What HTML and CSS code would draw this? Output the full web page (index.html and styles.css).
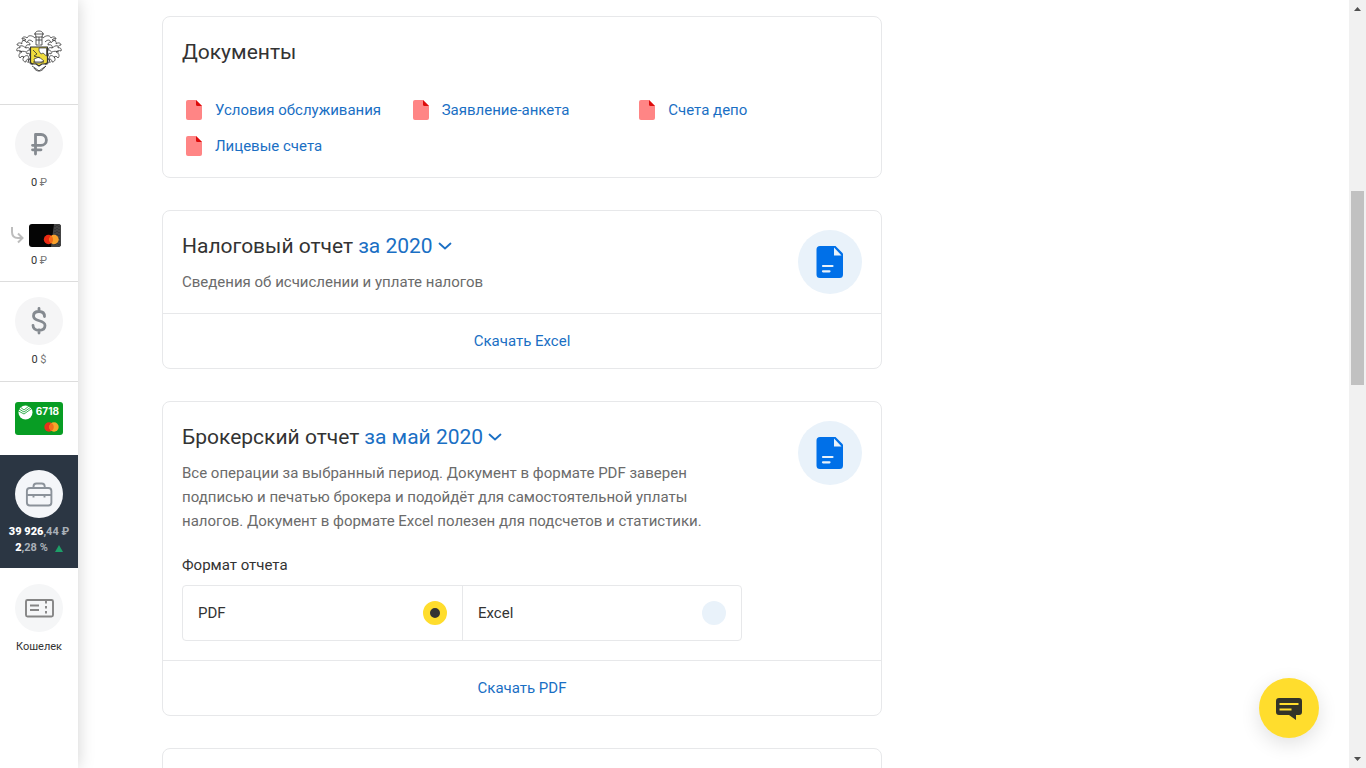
FILE: index.html
```html
<!DOCTYPE html>
<html lang="ru">
<head>
<meta charset="utf-8">
<meta name="viewport" content="width=device-width, initial-scale=1">
<title>Документы и отчеты</title>
<link rel="stylesheet" href="styles.css">
</head>
<body>
<svg class="sprite" aria-hidden="true">
  <symbol id="pdf" viewBox="0 0 16 20">
    <path fill="#ff8585" d="M2 0h8l6 6v12a2 2 0 0 1-2 2H2a2 2 0 0 1-2-2V2a2 2 0 0 1 2-2z"/>
    <path fill="#dd0b0b" d="M10 0l6 6h-4.500a1.500 1.500 0 0 1-1.500-1.500z"/>
  </symbol>
  <symbol id="report" viewBox="0 0 64 64">
    <path fill="#0070e8" d="M22 16h14l9 9v19.500a3.500 3.500 0 0 1-3.500 3.500h-19.500a3.500 3.500 0 0 1-3.500-3.500V19.500A3.500 3.500 0 0 1 22 16z"/>
    <path fill="#0070e8" d="M34 16h3.500L45 23.500V28z"/>
    <path fill="#e9f2fa" d="M36 17.500l7.500 8H36z"/>
    <path stroke="#e9f2fa" stroke-width="2.200" stroke-linecap="round" d="M25 36h9.500M25 41.300h6.500"/>
  </symbol>
  <symbol id="chevron" viewBox="0 0 14 8">
    <path fill="none" stroke="#1a6fc4" stroke-width="1.800" stroke-linecap="round" stroke-linejoin="round" d="M1.500 1.500L7 6.500l5.500-5"/>
  </symbol>
</svg>
<div class="app">
  <nav class="sidebar" aria-label="Счета">
    <a class="brand" href="#" aria-label="На главную">
      <svg width="48" height="44" viewBox="0 0 48 44" fill="none" stroke="#333" stroke-width=".8" stroke-linejoin="round">
        <g id="mantle">
          <path d="M20 8c-3-3-7-3-8 0-2-2-5-1-5 1 2-1 3 0 4 1-3 0-5 2-4 4-2-2-5-1-5 1 2 0 3 1 3 3-2-1-4 1-3 3 2-1 4 0 5 1-3 1-4 4-2 6 1-2 3-2 4-1-2 2-1 5 2 5 0-2 1-3 3-3-1 3 1 6 4 5-1-2 1-3 2-3"/>
          <path d="M18 12c-3-3-5-2-6 0 2 0 3 1 3 3-3-1-5 1-4 3 2-1 4 0 4 2-3 0-4 2-3 4 1-1 3-1 3 1-2 1-2 4 1 5M7 10c3 0 4 2 5 3M5 16c3-1 4 1 6 2M4 22c3-1 5-1 7 0M8 28c2-2 3-3 5-2M13 33c0-3 1-4 3-5"/>
        </g>
        <use href="#mantle" transform="translate(48 0) scale(-1 1)"/>
        <path fill="#fff" d="M20 4c0-4 8-4 8 0l-1 2v9h-6V6zM19 4h10M20 7h8M24 7v7M21 10h6"/>
        <path fill="#f0dc3c" stroke-width="1.200" d="M15.500 17h17v15q0 2-4 2h-1.500l-3 2-3-2h-1.500q-4 0-4-2z"/>
        <path fill="#fff" stroke-width=".7" d="M24 18h7.500v8l-3.500-3-2 1-2-3zM19 29l5-2 5 4-4 2h-5z"/>
        <path d="M18 20l4 4-3 2 6 2M18 32h11M19 38c2 4 8 4 10 0l2-2M17 36l3 2 4 3 4-3 3-2"/>
      </svg>
    </a>
    <div class="group">
      <a class="account" href="#">
        <span class="disc"><svg width="48" height="48" viewBox="0 0 48 48" fill="none" stroke="#858a90" stroke-width="2.800" stroke-linecap="round" stroke-linejoin="round"><path d="M20.500 34V14.500h5.500a5.200 5.200 0 0 1 0 10.800H17.500M17.500 29.800H26"/></svg></span>
        <span class="amount">0 <i>₽</i></span>
      </a>
      <a class="account linked" href="#">
        <span class="linked-row">
          <svg width="14" height="18" viewBox="0 0 14 18" fill="none" stroke="#bdbdbd" stroke-width="2"><path d="M2 0v5q0 6 6 6h4M8 6.500l4.500 4.500L8 15.500"/></svg>
          <svg width="32" height="23" viewBox="0 0 32 23"><rect width="32" height="23" rx="3" fill="#050505"/><path fill="#444" d="M25 0h4a3 3 0 0 1 3 3v17a3 3 0 0 1-3 3h-7z"/><path stroke="#222" stroke-width=".8" stroke-dasharray="1 2" d="M26 2v20M28 1v21M30 2v19"/><circle cx="19.500" cy="15.500" r="4.700" fill="#eb2a12"/><circle cx="25" cy="15.500" r="4.700" fill="#f9a22b"/><path fill="#f56a18" d="M22.200 11.700a4.700 4.700 0 0 1 0 7.600 4.700 4.700 0 0 1 0-7.600z"/></svg>
        </span>
        <span class="amount">0 <i>₽</i></span>
      </a>
    </div>
    <a class="group account" href="#">
      <span class="disc"><svg width="48" height="48" viewBox="0 0 48 48" fill="none" stroke="#858a90" stroke-width="2.800" stroke-linecap="round"><path d="M24 11.500v3M24 33v3M29.500 19.500c0-3-2-5-5.500-5s-5.500 1.700-5.500 4.500c0 6.500 11.500 3 11.500 9.500 0 3-2.300 4.800-6 4.800s-6-2-6-5"/></svg></span>
      <span class="amount">0 <i>$</i></span>
    </a>
    <a class="bank" href="#" aria-label="Карта 6718">
      <span class="bank-card">
        <span class="bank-top">
          <svg width="15" height="15" viewBox="0 0 15 15"><circle cx="7.500" cy="7.500" r="7" fill="#fff"/><path fill="none" stroke="#089d24" stroke-width=".8" d="M.5 6L6 9l8.500-6M1 4l5 3 7-5M2.500 2.300L6 5l5-4"/></svg>
          <b>6718</b>
        </span>
        <svg class="mc" width="15" height="10" viewBox="0 0 15 10"><circle cx="5" cy="5" r="4.700" fill="#e5321b"/><circle cx="10" cy="5" r="4.700" fill="#f9a72b"/><path fill="#f4701c" d="M7.500 1a4.700 4.700 0 0 1 0 8 4.700 4.700 0 0 1 0-8z"/></svg>
      </span>
    </a>
    <a class="account active" href="#" aria-current="page">
      <span class="disc"><svg width="48" height="48" viewBox="0 0 48 48" fill="none" stroke="#8b929a" stroke-width="1.900"><rect x="11.900" y="18" width="24.500" height="17.500" rx="3"/><path d="M18.500 18v-1.500q0-3 3-3h5.200q3 0 3 3V18M12 25h24.500M18.500 25v2.500M29.500 25v2.500"/></svg></span>
      <span class="sum"><b>39 926</b>,44 ₽</span>
      <span class="sum change"><span><b>2</b>,28 %</span><svg width="8" height="7" viewBox="0 0 8 7"><path fill="#1d9f68" d="M4 0l4 7H0z"/></svg></span>
    </a>
    <a class="account wallet" href="#">
      <span class="disc"><svg width="48" height="48" viewBox="0 0 48 48" fill="none" stroke="#858585" stroke-width="1.900"><rect x="11" y="16" width="27" height="16.500" rx="1.500"/><path d="M15 21.500h9M15 26h9"/><path stroke-dasharray="2.500 2.500" d="M31 17v15"/></svg></span>
      <span class="label">Кошелек</span>
    </a>
  </nav>
  <main class="content">
    <section class="card">
      <div class="card-body docs">
        <h2>Документы</h2>
        <ul class="files">
          <li><a href="#"><svg width="16" height="20"><use href="#pdf"/></svg>Условия обслуживания</a></li>
          <li><a href="#"><svg width="16" height="20"><use href="#pdf"/></svg>Заявление-анкета</a></li>
          <li><a href="#"><svg width="16" height="20"><use href="#pdf"/></svg>Счета депо</a></li>
          <li><a href="#"><svg width="16" height="20"><use href="#pdf"/></svg>Лицевые счета</a></li>
        </ul>
      </div>
    </section>
    <section class="card">
      <div class="card-body split">
        <div class="info">
          <div class="title"><h2><label for="tax">Налоговый отчет</label></h2><select id="tax"><option>за 2020</option></select><svg width="14" height="8"><use href="#chevron"/></svg></div>
          <p>Сведения об исчислении и уплате налогов</p>
        </div>
        <span class="badge"><svg width="64" height="64"><use href="#report"/></svg></span>
      </div>
      <button class="download" type="button">Скачать Excel</button>
    </section>
    <section class="card">
      <div class="card-body split">
        <div class="info">
          <div class="title"><h2><label for="broker">Брокерский отчет</label></h2><select id="broker"><option>за май 2020</option></select><svg width="14" height="8"><use href="#chevron"/></svg></div>
          <p>Все операции за выбранный период. Документ в формате PDF заверен подписью и печатью брокера и подойдёт для самостоятельной уплаты налогов. Документ в формате Excel полезен для подсчетов и статистики.</p>
          <fieldset class="format">
            <legend>Формат отчета</legend>
            <div class="options">
              <label>PDF<input type="radio" name="format" checked></label>
              <label>Excel<input type="radio" name="format"></label>
            </div>
          </fieldset>
        </div>
        <span class="badge"><svg width="64" height="64"><use href="#report"/></svg></span>
      </div>
      <button class="download" type="button">Скачать PDF</button>
    </section>
    <section class="card next"></section>
  </main>
  <div class="scrollbar" aria-hidden="true">
    <svg width="7" height="4" viewBox="0 0 7 4"><path fill="#505050" d="M3.500 0L7 4H0z"/></svg>
    <div class="track"><div class="thumb"></div></div>
    <svg width="7" height="4" viewBox="0 0 7 4"><path fill="#505050" d="M0 0h7L3.500 4z"/></svg>
  </div>
</div>
<button class="chat" type="button" aria-label="Чат">
  <svg width="26" height="24" viewBox="0 0 26 24"><path fill="#333428" d="M3 1h20a3 3 0 0 1 3 3v11a3 3 0 0 1-3 3h-3v5l-7-5H3a3 3 0 0 1-3-3V4a3 3 0 0 1 3-3z"/><path stroke="#ffdd2d" stroke-width="2.200" d="M3.500 7h19M3.500 12.500h12"/></svg>
</button>
</body>
</html>
```

FILE: styles.css
```css
* { box-sizing: border-box; }
body {
  margin: 0;
  background: #fff;
  color: #333;
  font: 15px/24px Roboto, "Noto Sans", sans-serif;
}
a { color: #1a6fc4; text-decoration: none; }
svg { display: block; flex: none; }
.sprite { position: absolute; width: 0; height: 0; }
.app { display: flex; height: 100vh; overflow: hidden; }

.sidebar {
  flex: none;
  width: 78px;
  display: flex;
  flex-direction: column;
  box-shadow: 0 0 16px rgba(0, 0, 0, .18);
}
.brand {
  display: flex;
  justify-content: center;
  padding: 30px 0;
  border-bottom: 1px solid #ddd;
}
.group { border-bottom: 1px solid #ddd; }
.account {
  display: flex;
  flex-direction: column;
  align-items: center;
  padding: 15px 0 13px;
  color: #333;
  font-size: 11px;
  line-height: 16px;
}
.disc {
  width: 48px;
  height: 48px;
  margin-bottom: 7px;
  border-radius: 50%;
  background: #f5f5f6;
}
.amount i { font-style: normal; color: #777; }
.linked { padding: 20px 0 12px; }
.linked-row {
  align-self: stretch;
  display: flex;
  align-items: center;
  gap: 5px;
  padding-left: 10px;
  margin-bottom: 6px;
}
.bank { display: flex; justify-content: center; padding: 20px 0; }
.bank-card {
  display: flex;
  flex-direction: column;
  justify-content: space-between;
  width: 48px;
  height: 33px;
  padding: 3px 4px 3px 3px;
  border-radius: 3px;
  background: #089d24;
  color: #fff;
  font: 10px/12px Inter, sans-serif;
}
.bank-top { display: flex; justify-content: space-between; height: 14px; }
.mc { align-self: flex-end; }
.active { background: #2b3643; color: #a9b0b8; padding-bottom: 12px; }
.active .disc { background: #f4f6f9; margin-bottom: 6px; }
.sum { font-weight: 700; white-space: nowrap; }
.sum b { color: #fff; }
.change { display: flex; align-items: center; gap: 7px; }
.wallet { padding-top: 16px; }
.wallet .disc { background: #f5f6f7; }

.content {
  flex: 1;
  min-width: 0;
  display: flex;
  flex-direction: column;
  gap: 32px;
  padding: 16px 84px 0;
}
.card {
  flex: none;
  width: 100%;
  max-width: 720px;
  border: 1px solid #e7e8ea;
  border-radius: 8px;
}
.card-body { padding: 19px; }
.docs { padding-bottom: 13px; }
h2 { margin: 0; font-size: 21px; line-height: 32px; font-weight: 400; }
.files {
  list-style: none;
  margin: 24px 0 0;
  padding: 0;
  display: grid;
  grid-template-columns: repeat(3, 1fr);
}
.files a { display: flex; align-items: center; gap: 13px; height: 36px; padding-left: 4px; }
.split { display: flex; justify-content: space-between; align-items: flex-start; }
.info { flex: 0 1 560px; }
.title { display: flex; align-items: center; }
.title select {
  appearance: none;
  margin: 0 5px;
  padding: 0;
  border: 0;
  background: none;
  color: #1a6fc4;
  font: 21px/32px Roboto, "Noto Sans", sans-serif;
}
p { margin: 8px 0 0; max-width: 528px; color: #6b6b6b; }
.badge { border-radius: 50%; background: #e9f2fa; }
.download {
  display: block;
  width: 100%;
  padding: 15px 0;
  border: 0;
  border-top: 1px solid #e7e8ea;
  background: none;
  color: #1a6fc4;
  font: inherit;
}
.format { margin: 20px 0 0; padding: 0; border: 0; }
legend { padding: 0; }
.options {
  display: grid;
  grid-template-columns: 1fr 1fr;
  margin-top: 8px;
  border: 1px solid #e7e8ea;
  border-radius: 4px;
}
.options label {
  display: flex;
  justify-content: space-between;
  align-items: center;
  padding: 15px;
}
.options label + label { border-left: 1px solid #e7e8ea; }
input[type="radio"] {
  appearance: none;
  width: 24px;
  height: 24px;
  margin: 0;
  border-radius: 50%;
  background: #e9f2fa;
}
input[type="radio"]:checked { border: 7px solid #ffdd2d; background: #333; }
.next { height: 120px; }

.scrollbar {
  flex: none;
  width: 17px;
  display: flex;
  flex-direction: column;
  align-items: center;
  justify-content: space-between;
  padding: 7px 0;
  background: #f1f1f1;
}
.track { flex: 1; width: 13px; padding-top: 180px; }
.thumb { height: 194px; background: #c1c1c1; }
.chat {
  position: fixed;
  right: 47px;
  bottom: 30px;
  width: 60px;
  height: 60px;
  display: grid;
  place-items: center;
  padding: 2px 0 0;
  border: 0;
  border-radius: 50%;
  background: #ffdd2d;
  box-shadow: 0 6px 20px rgba(0, 0, 0, .12);
}
```
